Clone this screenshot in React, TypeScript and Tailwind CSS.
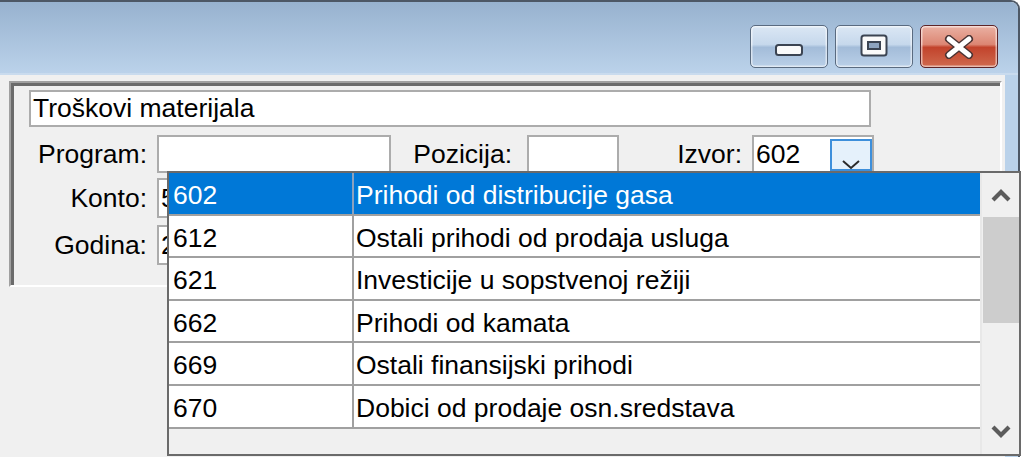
import React from 'react';

const items: [string, string][] = [
  ['602', 'Prihodi od distribucije gasa'],
  ['612', 'Ostali prihodi od prodaja usluga'],
  ['621', 'Investicije u sopstvenoj režiji'],
  ['662', 'Prihodi od kamata'],
  ['669', 'Ostali finansijski prihodi'],
  ['670', 'Dobici od prodaje osn.sredstava'],
];

const Field = ({ className, children }: { className: string; children?: React.ReactNode }) => (
  <div className={`shrink-0 border-2 border-[#acacac] bg-white pl-[2px] flex items-center overflow-hidden whitespace-nowrap ${className}`}>
    {children}
  </div>
);

const Label = ({ className, text }: { className: string; text: string }) => (
  <div className={`h-full flex items-center justify-end shrink-0 ${className}`}>{text}</div>
);

const CaptionButton = ({ kind }: { kind: 'min' | 'max' | 'close' }) => {
  const close = kind === 'close';
  return (
    <div
      className={`w-[78px] h-[43px] rounded-[5px] border-[1.5px] flex items-center justify-center shadow-[inset_0_0_0_1.5px_rgba(255,255,255,0.55)] ${
        close
          ? 'border-[#5e2528] bg-[linear-gradient(to_bottom,#eab1a3_0%,#dc8673_45%,#c2432c_52%,#cf6a4e_100%)]'
          : 'border-[#5a6b80] bg-[linear-gradient(to_bottom,#dbe7f4_0%,#c6d8ec_45%,#a3bcd9_52%,#bad0e8_100%)]'
      }`}
    >
      {kind === 'min' && (
        <svg width="30" height="14" viewBox="0 0 30 14" className="mt-[6px]">
          <rect x="2" y="2" width="26" height="10" rx="2.5" fill="#fafafa" stroke="#3b4452" strokeWidth="2" />
        </svg>
      )}
      {kind === 'max' && (
        <svg width="28" height="23" viewBox="0 0 28 23" className="-mt-[2px]">
          <rect x="1.5" y="1.5" width="25" height="20" rx="2.5" fill="#fafafa" stroke="#3b4452" strokeWidth="2" />
          <rect x="8" y="8" width="12" height="7" fill="#8ea4bf" stroke="#3b4452" strokeWidth="2" />
        </svg>
      )}
      {close && (
        <svg width="32" height="24" viewBox="0 0 32 24">
          <path d="M6 4 L26 20 M26 4 L6 20" stroke="#4a3434" strokeWidth="8" strokeLinecap="round" />
          <path d="M6 4 L26 20 M26 4 L6 20" stroke="#ffffff" strokeWidth="5" strokeLinecap="round" />
        </svg>
      )}
    </div>
  );
};

const Chevron = ({ up }: { up?: boolean }) => (
  <svg width="20" height="14" viewBox="0 0 20 14">
    <path d={up ? 'M2 12 L10 4 L18 12' : 'M2 2 L10 10 L18 2'} fill="none" stroke="#5c5c5c" strokeWidth="4.2" />
  </svg>
);

export default function App() {
  return (
    <div className="relative w-[1023px] h-[457px] overflow-hidden bg-white font-[family-name:'Liberation_Sans',Arial,sans-serif] text-[26.5px] leading-none text-black">
      {/* window */}
      <div className="w-[1020px] h-full flex flex-col border-t-2 border-r-2 border-[#4d5866] rounded-tr-[9px] overflow-hidden">
        {/* title bar */}
        <div className="h-[73px] shrink-0 flex justify-end items-start pt-[23px] pr-[20px] gap-[7px] bg-[linear-gradient(to_bottom,#97b2cf,#bbd2ea)] border-b-2 border-[#c9dbee]">
          <CaptionButton kind="min" />
          <CaptionButton kind="max" />
          <CaptionButton kind="close" />
        </div>

        <div className="flex-1 flex">
          {/* client area */}
          <div className="w-[1005px] bg-[#f0f0f0] pt-[6px] pl-[9px]">
            <div className="w-[993px] h-[206px] border-2 border-t-[#a0a0a0] border-l-[#a0a0a0] border-r-white border-b-white shadow-[inset_3px_3px_0_#6b6b6b] pl-[18px] pt-[7px] flex flex-col">
              <Field className="w-[842px] h-[37px]">Troškovi materijala</Field>

              <div className="mt-[8px] h-[38px] shrink-0 flex">
                <Label className="w-[128px] pr-[10px]" text="Program:" />
                <Field className="w-[234px] h-full" />
                <Label className="w-[136px] pr-[15px]" text="Pozicija:" />
                <Field className="w-[92px] h-full" />
                <Label className="w-[133px] pr-[10px]" text="Izvor:" />
                <div className="w-[122px] h-full border-2 border-[#acacac] bg-white flex">
                  <div className="flex-1 pl-[2px] flex items-center">602</div>
                  <div className="w-[42px] mt-[2px] border-2 border-[#3d8fdb] bg-[#e5f1fb] flex justify-center pt-[18px]">
                    <svg width="20" height="12" viewBox="0 0 20 12">
                      <path d="M2 2 L10 9 L18 2" fill="none" stroke="#2b2b2b" strokeWidth="2" />
                    </svg>
                  </div>
                </div>
              </div>

              <div className="mt-[5px] h-[40px] shrink-0 flex">
                <Label className="w-[128px] pr-[10px]" text="Konto:" />
                <Field className="w-[200px] h-full">
                  <span className="inline-block w-[7px] overflow-hidden">5</span>
                </Field>
              </div>

              <div className="mt-[7px] h-[40px] shrink-0 flex">
                <Label className="w-[128px] pr-[10px]" text="Godina:" />
                <Field className="w-[200px] h-full">
                  <span className="inline-block w-[7px] overflow-hidden">2</span>
                </Field>
              </div>
            </div>
          </div>
          {/* right window frame */}
          <div className="flex-1 bg-[#bad2ea]" />
        </div>
      </div>

      {/* open dropdown list */}
      <div className="absolute left-[167px] top-[171px] w-[854px] h-[285px] border-2 border-[#6a6a6a] bg-[#f0f0f0] flex">
        <div className="flex-1 flex flex-col">
          {items.map(([code, name], i) => {
            const sel = i === 0;
            return (
              <div
                key={code}
                className={`h-[42.6px] shrink-0 flex border-b-2 border-[#a0a0a0] ${sel ? 'bg-[#0078d7] text-white' : 'bg-white'}`}
              >
                <div className={`w-[185px] shrink-0 border-r-2 pl-[4px] pt-[4px] flex items-center ${sel ? 'border-[#8aa2bf]' : 'border-[#a0a0a0]'}`}>
                  {code}
                </div>
                <div className="flex-1 pl-[2px] pt-[4px] flex items-center whitespace-nowrap">{name}</div>
              </div>
            );
          })}
        </div>
        {/* scrollbar */}
        <div className="w-[39px] flex flex-col border-l-2 border-[#e8e8e8]">
          <div className="h-[44px] flex items-center justify-center">
            <Chevron up />
          </div>
          <div className="h-[106px] ml-[1px] bg-[#cdcdcd]" />
          <div className="flex-1" />
          <div className="h-[44px] flex items-center justify-center">
            <Chevron />
          </div>
        </div>
      </div>
    </div>
  );
}
